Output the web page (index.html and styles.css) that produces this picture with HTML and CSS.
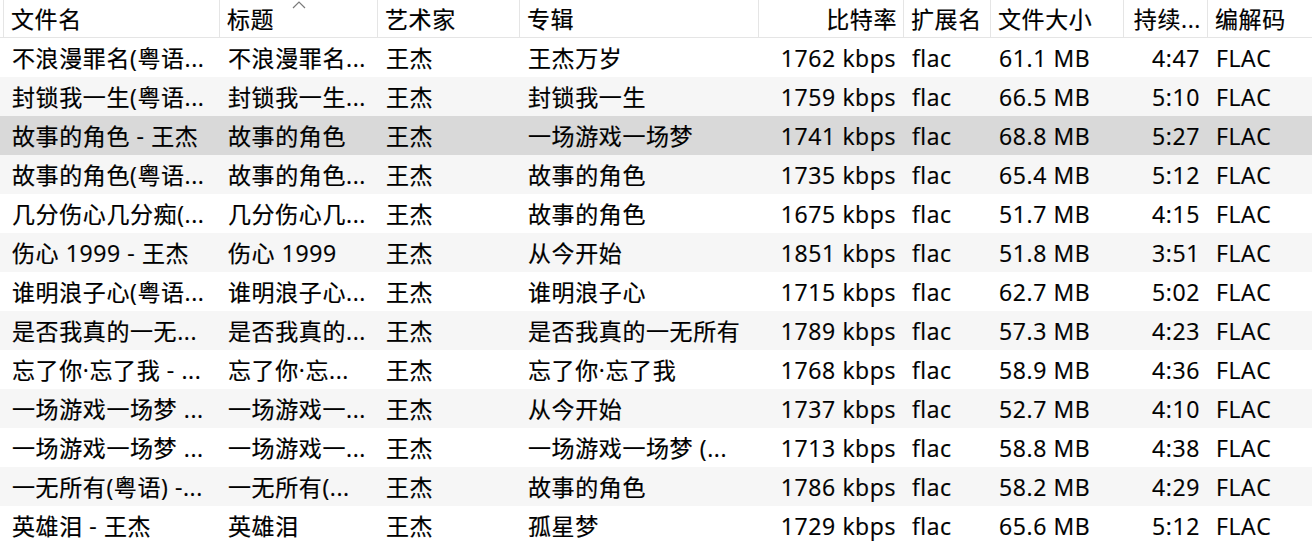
FILE: index.html
```html
<!DOCTYPE html>
<html lang="zh-CN">
<head>
<meta charset="utf-8">
<title>文件列表</title>
<link rel="stylesheet" href="styles.css">
</head>
<body>
<div class="list">
  <div class="head">
    <div class="hc first">文件名</div>
    <div class="hc sorted">标题<svg class="sort" width="14" height="9" viewBox="0 0 14 9"><path d="M1 8 L7 2 L13 8" fill="none" stroke="#7a7a7a" stroke-width="1.2"/></svg></div>
    <div class="hc">艺术家</div>
    <div class="hc">专辑</div>
    <div class="hc r">比特率</div>
    <div class="hc">扩展名</div>
    <div class="hc">文件大小</div>
    <div class="hc r">持续...</div>
    <div class="hc">编解码</div>
  </div>

  <div class="row">
    <div class="c c1">不浪漫罪名(粤语...</div><div class="c">不浪漫罪名...</div><div class="c">王杰</div><div class="c">王杰万岁</div><div class="c r">1762 kbps</div><div class="c">flac</div><div class="c">61.1 MB</div><div class="c r">4:47</div><div class="c">FLAC</div>
  </div>
  <div class="row alt">
    <div class="c c1">封锁我一生(粤语...</div><div class="c">封锁我一生...</div><div class="c">王杰</div><div class="c">封锁我一生</div><div class="c r">1759 kbps</div><div class="c">flac</div><div class="c">66.5 MB</div><div class="c r">5:10</div><div class="c">FLAC</div>
  </div>
  <div class="row sel">
    <div class="c c1">故事的角色 - 王杰</div><div class="c">故事的角色</div><div class="c">王杰</div><div class="c">一场游戏一场梦</div><div class="c r">1741 kbps</div><div class="c">flac</div><div class="c">68.8 MB</div><div class="c r">5:27</div><div class="c">FLAC</div>
  </div>
  <div class="row alt">
    <div class="c c1">故事的角色(粤语...</div><div class="c">故事的角色...</div><div class="c">王杰</div><div class="c">故事的角色</div><div class="c r">1735 kbps</div><div class="c">flac</div><div class="c">65.4 MB</div><div class="c r">5:12</div><div class="c">FLAC</div>
  </div>
  <div class="row">
    <div class="c c1">几分伤心几分痴(...</div><div class="c">几分伤心几...</div><div class="c">王杰</div><div class="c">故事的角色</div><div class="c r">1675 kbps</div><div class="c">flac</div><div class="c">51.7 MB</div><div class="c r">4:15</div><div class="c">FLAC</div>
  </div>
  <div class="row alt">
    <div class="c c1">伤心 1999 - 王杰</div><div class="c">伤心 1999</div><div class="c">王杰</div><div class="c">从今开始</div><div class="c r">1851 kbps</div><div class="c">flac</div><div class="c">51.8 MB</div><div class="c r">3:51</div><div class="c">FLAC</div>
  </div>
  <div class="row">
    <div class="c c1">谁明浪子心(粤语...</div><div class="c">谁明浪子心...</div><div class="c">王杰</div><div class="c">谁明浪子心</div><div class="c r">1715 kbps</div><div class="c">flac</div><div class="c">62.7 MB</div><div class="c r">5:02</div><div class="c">FLAC</div>
  </div>
  <div class="row alt">
    <div class="c c1">是否我真的一无...</div><div class="c">是否我真的...</div><div class="c">王杰</div><div class="c">是否我真的一无所有</div><div class="c r">1789 kbps</div><div class="c">flac</div><div class="c">57.3 MB</div><div class="c r">4:23</div><div class="c">FLAC</div>
  </div>
  <div class="row">
    <div class="c c1">忘了你·忘了我 - ...</div><div class="c">忘了你·忘...</div><div class="c">王杰</div><div class="c">忘了你·忘了我</div><div class="c r">1768 kbps</div><div class="c">flac</div><div class="c">58.9 MB</div><div class="c r">4:36</div><div class="c">FLAC</div>
  </div>
  <div class="row alt">
    <div class="c c1">一场游戏一场梦 ...</div><div class="c">一场游戏一...</div><div class="c">王杰</div><div class="c">从今开始</div><div class="c r">1737 kbps</div><div class="c">flac</div><div class="c">52.7 MB</div><div class="c r">4:10</div><div class="c">FLAC</div>
  </div>
  <div class="row">
    <div class="c c1">一场游戏一场梦 ...</div><div class="c">一场游戏一...</div><div class="c">王杰</div><div class="c">一场游戏一场梦 (...</div><div class="c r">1713 kbps</div><div class="c">flac</div><div class="c">58.8 MB</div><div class="c r">4:38</div><div class="c">FLAC</div>
  </div>
  <div class="row alt">
    <div class="c c1">一无所有(粤语) -...</div><div class="c">一无所有(...</div><div class="c">王杰</div><div class="c">故事的角色</div><div class="c r">1786 kbps</div><div class="c">flac</div><div class="c">58.2 MB</div><div class="c r">4:29</div><div class="c">FLAC</div>
  </div>
  <div class="row">
    <div class="c c1">英雄泪 - 王杰</div><div class="c">英雄泪</div><div class="c">王杰</div><div class="c">孤星梦</div><div class="c r">1729 kbps</div><div class="c">flac</div><div class="c">65.6 MB</div><div class="c r">5:12</div><div class="c">FLAC</div>
  </div>
</div>
</body>
</html>
```

FILE: styles.css
```css
html, body {
  margin: 0;
  padding: 0;
  background: #ffffff;
}

body {
  width: 1312px;
  height: 552px;
  overflow: hidden;
  font-family: "Open Sans", "Noto Sans CJK SC", sans-serif;
  font-size: 23px;
  letter-spacing: 0.6px;
  color: #000000;
  -webkit-text-stroke: 0.2px #000000;
}

.list {
  display: flex;
  flex-direction: column;
}

.head,
.row {
  display: grid;
  grid-template-columns: 219px 158px 142px 239px 145px 87px 133px 84px 1fr;
}

.head {
  height: 37px;
  border-bottom: 1px solid #e5e5e5;
  background: #ffffff;
}

.hc {
  height: 37px;
  border-left: 1px solid #e5e5e5;
  padding: 0 6px 0 7px;
  line-height: 39px;
  white-space: nowrap;
  overflow: hidden;
}

.hc.first {
  margin-left: 3px;
  padding-left: 7px;
}

.hc.sorted {
  position: relative;
}

.sort {
  position: absolute;
  left: 72px;
  top: 0;
}

.hc.r,
.c.r {
  text-align: right;
}

.row {
  height: 39px;
  background: #ffffff;
}

.row.alt {
  background: #f6f6f6;
}

.row.sel {
  background: #d9d9d9;
}

.c {
  height: 39px;
  padding: 0 7px 0 9px;
  line-height: 41px;
  white-space: nowrap;
  overflow: hidden;
}

.c.c1 {
  padding-left: 12px;
}

.c.r {
  padding-right: 7px;
}
```
